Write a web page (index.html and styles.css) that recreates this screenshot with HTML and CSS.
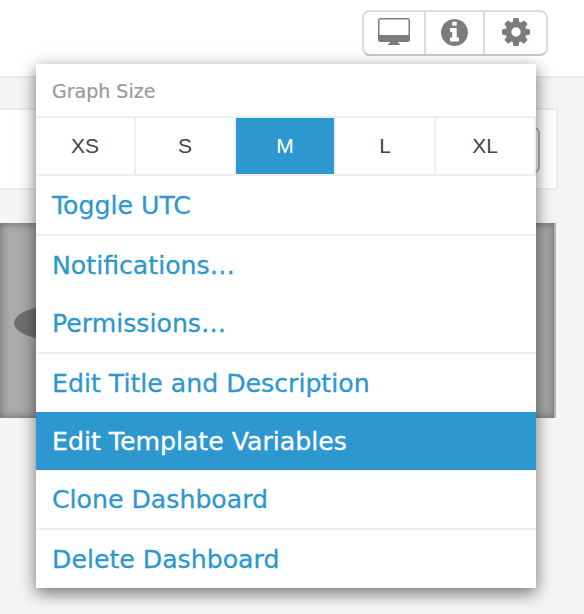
FILE: index.html
```html
<!DOCTYPE html>
<html lang="en">
<head>
<meta charset="utf-8">
<title>Dashboard settings</title>
<link rel="stylesheet" href="styles.css">
</head>
<body>
<header class="topbar">
  <div class="toolbar">
    <button class="tool tool-desktop" aria-label="Display">
      <svg class="icon-desktop" viewBox="0 0 32 27" width="32" height="27"><path fill-rule="evenodd" d="M2.500 0h27a2.500 2.500 0 0 1 2.500 2.500v19a2.500 2.500 0 0 1-2.500 2.500H20q0 1.500 2 2v1H10v-1q2-.5 2-2H2.500A2.500 2.500 0 0 1 0 21.500v-19A2.500 2.500 0 0 1 2.500 0zM1.500 1.500V17h29V1.500z"/></svg>
    </button>
    <button class="tool tool-info" aria-label="Info">
      <svg class="icon-info" viewBox="128 128 1536 1536" width="27" height="27"><path d="M1152 1376v-160q0-14-9-23t-23-9h-96v-512q0-14-9-23t-23-9h-320q-14 0-23 9t-9 23v160q0 14 9 23t23 9h96v320h-96q-14 0-23 9t-9 23v160q0 14 9 23t23 9h448q14 0 23-9t9-23zm-128-896v-160q0-14-9-23t-23-9h-192q-14 0-23 9t-9 23v160q0 14 9 23t23 9h192q14 0 23-9t9-23zm640 416q0 209-103 385.500t-279.500 279.500-385.500 103-385.500-103-279.500-279.500-103-385.500 103-385.500 279.500-279.500 385.500-103 385.500 103 279.500 279.500 103 385.500z"/></svg>
    </button>
    <button class="tool tool-gear" aria-label="Settings">
      <svg class="icon-gear" viewBox="128 128 1536 1536" width="28" height="28"><path d="M1152 896q0-106-75-181t-181-75-181 75-75 181 75 181 181 75 181-75 75-181zm512-109v222q0 12-8 23t-20 13l-185 28q-19 54-39 91 35 50 107 138 10 12 10 25t-9 23q-27 37-99 108t-94 71q-12 0-26-9l-138-108q-44 23-91 38-16 136-29 186-7 28-36 28h-222q-14 0-24.500-8.500t-11.500-21.500l-28-184q-49-16-90-37l-141 107q-10 9-25 9-14 0-25-11-126-114-165-168-7-10-7-23 0-12 8-23 15-21 51-66.500t54-70.500q-27-50-41-99l-183-27q-13-2-21-12.500t-8-23.500v-222q0-12 8-23t19-13l186-28q14-46 39-92-40-57-107-138-10-12-10-24 0-10 9-23 26-36 98.500-107.500t94.500-71.500q13 0 26 10l138 107q44-23 91-38 16-136 29-186 7-28 36-28h222q14 0 24.500 8.500t11.500 21.500l28 184q49 16 90 37l142-107q9-9 24-9 13 0 25 10 129 119 165 170 7 8 7 22 0 12-8 23-15 21-51 66.500t-54 70.500q26 50 41 98l183 28q13 2 21 12.500t8 23.500z"/></svg>
    </button>
  </div>
</header>

<main class="page">
  <section class="filter-panel">
    <span class="filter-button"></span>
  </section>
  <section class="graph-panel">
    <span class="graph-blob"></span>
  </section>
</main>

<nav class="menu">
  <div class="menu-title">Graph Size</div>
  <div class="sizes">
    <a class="size">XS</a>
    <a class="size">S</a>
    <a class="size size-active">M</a>
    <a class="size">L</a>
    <a class="size">XL</a>
  </div>
  <a class="item item-rule">Toggle UTC</a>
  <a class="item">Notifications…</a>
  <a class="item item-rule">Permissions…</a>
  <a class="item">Edit Title and Description</a>
  <a class="item item-active">Edit Template Variables</a>
  <a class="item item-rule">Clone Dashboard</a>
  <a class="item">Delete Dashboard</a>
</nav>
</body>
</html>
```

FILE: styles.css
```css
* { box-sizing: border-box; }

html, body { height: 100%; }

body {
  margin: 0;
  background: #f5f5f5;
  font-family: "DejaVu Sans", sans-serif;
  overflow: hidden;
}

.topbar {
  height: 78px;
  background: #fff;
  border-bottom: 2px solid #e9e9e9;
  padding: 10px 36px 0 0;
  display: flex;
  justify-content: flex-end;
  align-items: flex-start;
}

.toolbar {
  display: flex;
  height: 46px;
  border: 2px solid #dcdcdc;
  border-bottom-color: #c8c8c8;
  border-radius: 8px;
  background: #fff;
}

.tool {
  border: 0;
  padding: 0;
  margin: 0;
  background: none;
  display: flex;
  align-items: center;
  justify-content: center;
  height: 100%;
  border-right: 2px solid #dcdcdc;
}

.tool svg { fill: #7c7c7c; display: block; }

.tool-desktop { width: 62px; }
.tool-info { width: 59px; }
.tool-gear { width: 61px; border-right: 0; }

.icon-desktop { margin-bottom: 3px; }
.icon-info { margin-bottom: 1px; }
.icon-gear { margin-bottom: 3px; }

.page {
  padding-top: 30px;
}

.filter-panel {
  position: relative;
  height: 82px;
  margin-right: 26px;
  background: #fff;
  border: 2px solid #ececec;
  border-left: 0;
}

.filter-button {
  position: absolute;
  right: 16px;
  top: 17px;
  width: 8px;
  height: 46px;
  border: 2px solid #b4b4b4;
  border-left: 0;
  border-radius: 0 6px 6px 0;
}

.graph-panel {
  position: relative;
  height: 195px;
  margin: 33px 28px 0 0;
  background: #ababab;
  border-right: 2px solid #b5b5b5;
  box-shadow: inset 0 0 10px rgba(0, 0, 0, .4);
}

.graph-blob {
  position: absolute;
  left: 14px;
  top: 83px;
  width: 80px;
  height: 34px;
  border-radius: 50%;
  background: #707070;
}

.menu {
  position: absolute;
  left: 36px;
  top: 64px;
  width: 500px;
  height: 524px;
  background: #fff;
  display: flex;
  flex-direction: column;
  box-shadow: 0 5px 16px rgba(0, 0, 0, .55);
}

.menu-title {
  height: 52px;
  padding: 16px 16px 0;
  font-size: 19px;
  line-height: 22px;
  color: #999;
  -webkit-text-stroke: .2px #999;
}

.sizes {
  display: flex;
  height: 60px;
  border-top: 2px solid #eee;
  border-bottom: 2px solid #eee;
}

.size {
  flex: 1;
  border-right: 2px solid #eee;
  display: flex;
  align-items: center;
  justify-content: center;
  font-family: "Liberation Sans", sans-serif;
  font-size: 21px;
  color: #444;
}

.size-active {
  background: #2d97d0;
  color: #fff;
}

.item {
  display: block;
  height: 58px;
  padding: 0 16px;
  font-size: 25.2px;
  line-height: 60px;
  color: #2d97d0;
  white-space: nowrap;
  -webkit-text-stroke: .3px #2d97d0;
}

.item-rule {
  height: 60px;
  border-bottom: 2px solid #eee;
}

.item-active {
  background: #2d97d0;
  color: #fff;
  -webkit-text-stroke: .3px #fff;
}
```
